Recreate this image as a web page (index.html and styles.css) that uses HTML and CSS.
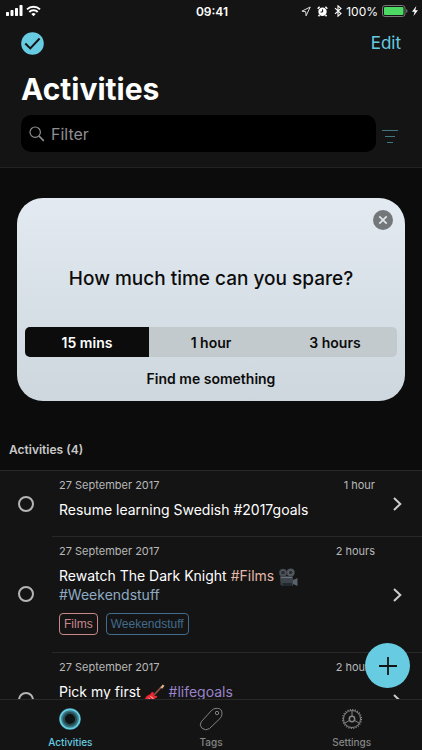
FILE: index.html
```html
<!DOCTYPE html>
<html lang="en">
<head>
<meta charset="utf-8">
<meta name="viewport" content="width=device-width, initial-scale=1">
<title>Activities</title>
<link rel="stylesheet" href="styles.css">
</head>
<body>
<div class="app">
  <header class="header">
    <div class="status">
      <div class="status-side">
        <svg width="17" height="12" viewBox="0 0 17 12" fill="#fff"><rect x="0" y="7" width="3" height="4" rx=".7"/><rect x="4.500" y="5" width="3" height="6" rx=".7"/><rect x="9" y="3" width="3" height="8" rx=".7"/><rect x="13.500" y="0" width="3" height="11" rx=".7"/></svg>
        <svg width="15" height="12" viewBox="0 0 15 12" fill="none" stroke="#fff" stroke-width="2"><path d="M1 4.400a9.300 9.300 0 0 1 13 0M3.300 7a6 6 0 0 1 8.400 0"/><path d="M7.500 11.300L5.300 9.100a3.100 3.100 0 0 1 4.400 0z" fill="#fff" stroke="none"/></svg>
      </div>
      <time class="clock">09:41</time>
      <div class="status-side status-right">
        <svg width="10" height="11" viewBox="0 0 10 11" fill="none" stroke="#ddd" stroke-width="1"><path d="M9.200 1L.9 5.200l3.800.5.400 4.100z"/></svg>
        <svg class="alarm" width="11" height="11" viewBox="0 0 11 11"><circle cx="5.500" cy="5.800" r="4.200" fill="#fff"/><path d="M.7 2.700L2.600.8M10.300 2.700L8.400.8M2.500 9l-1 1.300M8.500 9l1 1.300" stroke="#fff" stroke-width="1.500"/><path d="M5.600 3.300v2.700H3.500" fill="none" stroke="#141414"/></svg>
        <svg width="8" height="12" viewBox="0 0 8 12" fill="none" stroke="#fff" stroke-width="1.100"><path d="M1 3.200l6 5.400L4 11.200V.8l3 2.600-6 5.400"/></svg>
        <span class="percent">100%</span>
        <svg width="26" height="12" viewBox="0 0 26 12"><rect x=".5" y=".5" width="22.500" height="11" rx="2.500" fill="none" stroke="#777"/><rect x="2" y="2" width="19.500" height="8" rx="1" fill="#4cd964"/><path d="M24.200 4v4q1.300-.6 1.300-2t-1.300-2" fill="#777"/></svg>
        <svg width="6" height="10" viewBox="0 0 6 10"><path d="M4.300 0L0 5.700h2.600L1.500 10 6 4.200H3.300z" fill="#fff"/></svg>
      </div>
    </div>
    <div class="nav">
      <button class="icon-button" aria-label="Completed activities">
        <svg width="23" height="23" viewBox="0 0 23 23"><circle cx="11.500" cy="11.500" r="11.300" fill="#67cbe1"/><path d="M4.300 11.500l5 4.900 9.300-9.900" fill="none" stroke="#141414" stroke-width="2"/></svg>
      </button>
      <button class="edit">Edit</button>
    </div>
    <h1 class="title">Activities</h1>
    <div class="search-row">
      <label class="search">
        <svg width="16" height="16" viewBox="0 0 16 16" fill="none" stroke="#8e8e93" stroke-width="1.200"><circle cx="6.200" cy="6.200" r="5.200"/><path d="M10 10l4.800 4.800" stroke-width="1.700"/></svg>
        <input class="search-input" type="text" placeholder="Filter" aria-label="Filter">
      </label>
      <button class="icon-button sort" aria-label="Sort">
        <svg width="18" height="14" viewBox="0 0 18 14" stroke="#417783" stroke-width="1"><path d="M1 .5h16M4 6.500h10M6 12.500h6"/></svg>
      </button>
    </div>
  </header>

  <main class="content">
    <section class="card">
      <button class="icon-button close" aria-label="Close">
        <svg width="20" height="20" viewBox="0 0 20 20"><circle cx="10" cy="10" r="10" fill="#74777a"/><path d="M6.300 6.300l7.400 7.400M13.700 6.300l-7.400 7.400" stroke="#e0e6eb" stroke-width="1.700"/></svg>
      </button>
      <h2 class="question">How much time can you spare?</h2>
      <div class="segments">
        <button class="segment segment-on" aria-pressed="true">15 mins</button>
        <button class="segment" aria-pressed="false">1 hour</button>
        <button class="segment" aria-pressed="false">3 hours</button>
      </div>
      <button class="find">Find me something</button>
    </section>

    <h2 class="section-title">Activities (4)</h2>
    <ul class="list">
      <li class="row">
        <input class="check" type="checkbox" aria-label="Resume learning Swedish">
        <div class="row-main">
          <div class="row-body">
            <div class="meta"><span>27 September 2017</span><span>1 hour</span></div>
            <p class="name">Resume learning Swedish #2017goals</p>
          </div>
          <svg class="chevron" width="9" height="14" viewBox="0 0 9 14"><path d="M1 1l6.300 6L1 13"/></svg>
        </div>
      </li>
      <li class="row">
        <input class="check" type="checkbox" aria-label="Rewatch The Dark Knight">
        <div class="row-main">
          <div class="row-body">
            <div class="meta"><span>27 September 2017</span><span>2 hours</span></div>
            <p class="name">Rewatch The Dark Knight <span class="tag-films">#Films</span>
              <svg class="emoji" role="img" aria-label="Movie camera" width="20" height="20" viewBox="0 0 20 20"><path d="M6 10l-4 7M8 10l2 8" stroke="#33373c" stroke-width="1"/><circle cx="5" cy="4.700" r="4" fill="#41464c"/><circle cx="5" cy="4.700" r="2.400" fill="#292d31" stroke="#686e76" stroke-width=".7"/><circle cx="12.700" cy="4.500" r="4" fill="#4b5057"/><circle cx="12.700" cy="4.500" r="2.400" fill="#2c3034" stroke="#727981" stroke-width=".7"/><path d="M2 9q0-1 1-1h11q1 0 1 1v8q0 1-1 1H4q-2-3-2-9z" fill="#3c434a"/><path d="M3 9.500h11" stroke="#707780" stroke-width=".9"/><path d="M15 12l4.500-2v8L15 16z" fill="#59616a"/><path d="M4 15h10v3H5z" fill="#24292e"/></svg>
              <span class="tag-weekend">#Weekendstuff</span></p>
            <div class="chips"><a class="chip chip-films" href="#films">Films</a><a class="chip chip-weekend" href="#weekendstuff">Weekendstuff</a></div>
          </div>
          <svg class="chevron" width="9" height="14" viewBox="0 0 9 14"><path d="M1 1l6.300 6L1 13"/></svg>
        </div>
      </li>
      <li class="row row-tall">
        <input class="check" type="checkbox" aria-label="Pick my first guitar">
        <div class="row-main">
          <div class="row-body">
            <div class="meta"><span>27 September 2017</span><span>2 hours</span></div>
            <p class="name">Pick my first
              <svg class="emoji" role="img" aria-label="Guitar" width="20" height="20" viewBox="0 0 20 20"><path d="M8 12L16.500 2.800" stroke="#8a5140" stroke-width="1.700"/><path d="M15.500 3.500L17.600.5l1.900 1.200-2.300 3z" fill="#deb78f"/><path d="M1.500 12.200q2-1.500 3.800-2 1.200-2.700 3-1.900 1.100.8.200 2.200.4 1.500 1.700 1.400 1.700-.6 2 .8.100 1.300-2.400 1.800-1 .6-1.200 2.200-1.200 3-3.900 2.700Q0 17.500.2 14.200q.2-1.200 1.300-2z" fill="#ea2631"/><path d="M3.500 14.200l3 2.300M5.500 12.500l3 2.200" stroke="#ffd9d4" stroke-width="1"/><circle cx="3" cy="16.700" r=".7" fill="#fff"/></svg>
              <span class="tag-life">#lifegoals</span></p>
          </div>
          <svg class="chevron" width="9" height="14" viewBox="0 0 9 14"><path d="M1 1l6.300 6L1 13"/></svg>
        </div>
      </li>
    </ul>
  </main>

  <nav class="tabs">
    <button class="add" aria-label="Add activity">
      <svg width="20" height="20" viewBox="0 0 20 20"><path d="M10 1v18M1 10h18" stroke="#141414" stroke-width="1.800"/></svg>
    </button>
    <a class="tab tab-on" href="#activities" aria-current="page">
      <svg width="24" height="24" viewBox="0 0 24 24" fill="none"><circle cx="12" cy="12" r="8" fill="#101313" stroke="#264b53" stroke-width="6"/><circle cx="12" cy="12" r="8.500" stroke="#397984" stroke-width="3"/><circle cx="12" cy="12" r="9.700" stroke="#67cbe1" stroke-width="1.800"/></svg>
      <span>Activities</span>
    </a>
    <a class="tab" href="#tags">
      <svg width="24" height="24" viewBox="0 0 24 24" fill="none" stroke="#828282" stroke-width="1"><path d="M2.200 14.800L12.700 3.300Q14.500 1.500 17 1.400h1.600Q22.800 1.500 22.900 6v1.300Q22.800 9.500 21 11.500L10.300 21.700q-3.500 2.500-7.200-.4-3.300-3-.9-6.500z"/><circle cx="18" cy="6" r="1.700"/></svg>
      <span>Tags</span>
    </a>
    <a class="tab" href="#settings">
      <svg width="24" height="24" viewBox="0 0 24 24" fill="none" stroke="#858585"><circle cx="12" cy="12" r="8.500"/><circle cx="12" cy="12" r="9.400" stroke-width="1.400" stroke-dasharray="1.100 1.361"/><circle cx="12" cy="12" r="2.700" stroke-width="1.500"/><path d="M12 9V3.500M9.400 13.500l-4.800 2.700M14.600 13.500l4.800 2.700"/></svg>
      <span>Settings</span>
    </a>
  </nav>
</div>
</body>
</html>
```
FILE: styles.css
```css
* { box-sizing: border-box; }
body {
  margin: 0;
  background: #0c0c0c;
  color: #fff;
  font-family: Inter, "Liberation Sans", sans-serif;
}
button, input { font: inherit; color: inherit; }
button { border: 0; padding: 0; background: none; }
a { color: inherit; text-decoration: none; }
h1, h2, p, ul { margin: 0; padding: 0; }
svg { display: block; flex: none; }

.app { height: 100vh; display: flex; flex-direction: column; }

.header {
  background: #141414;
  border-bottom: 1px solid #222;
  padding-bottom: 15px;
}
.status {
  display: flex;
  align-items: center;
  height: 22px;
  padding: 0 4px 0 6px;
  font-size: 12px;
}
.status-side { flex: 1; display: flex; align-items: center; gap: 3px; }
.status-right { justify-content: flex-end; gap: 4px; }
.alarm { margin: 0 2px; }
.clock { font-weight: 600; }
.nav {
  display: flex;
  justify-content: space-between;
  align-items: center;
  height: 42px;
  padding: 0 21px;
}
.icon-button { display: flex; }
.edit { color: #67cbe1; font-size: 17px; }
.title {
  padding: 5px 21px 0;
  font-size: 30px;
  line-height: 40px;
  font-weight: 700;
}
.search-row {
  display: flex;
  align-items: center;
  gap: 5px;
  margin-top: 6px;
  padding: 0 23px 0 21px;
}
.search {
  flex: 1;
  display: flex;
  align-items: center;
  gap: 6px;
  height: 37px;
  padding: 0 8px;
  border-radius: 10px;
  background: #000;
}
.search-input {
  flex: 1;
  min-width: 0;
  padding: 0;
  border: 0;
  outline: 0;
  background: none;
  font-size: 16px;
}
.search-input::placeholder { color: #8e8e93; opacity: 1; }
.sort { padding-top: 6px; }

.content { flex: 1; min-height: 0; overflow: hidden; }
.card {
  display: flex;
  flex-direction: column;
  margin: 30px 17px 0;
  padding: 12px 8px;
  border-radius: 26px;
  background: linear-gradient(#e3eaf1, #ced7de);
  color: #0c0c0c;
}
.close { align-self: flex-end; margin-right: 4px; }
.question {
  margin: 36px 0;
  text-align: center;
  font-size: 19px;
  line-height: 25px;
  font-weight: 500;
}
.segments {
  display: flex;
  height: 30px;
  border-radius: 5px;
  overflow: hidden;
  background: #c3cace;
}
.segment { flex: 1; font-size: 14px; font-weight: 600; }
.segment-on { background: #0c0c0c; color: #fff; }
.find { margin-top: 12px; font-size: 14px; line-height: 20px; font-weight: 600; }

.section-title {
  padding: 39px 9px 10px;
  color: #c8c8c8;
  font-size: 12px;
  line-height: 20px;
  font-weight: 600;
}
.list { list-style: none; background: #141414; border-top: 1px solid #292929; }
.row { display: flex; align-items: center; padding-left: 18px; }
.check {
  appearance: none;
  flex: none;
  width: 16px;
  height: 16px;
  margin: 0 18px 0 0;
  border: 2px solid #b5b5b5;
  border-radius: 50%;
}
.row-main {
  flex: 1;
  align-self: stretch;
  display: flex;
  align-items: center;
  gap: 18px;
  padding: 0 20px 0 7px;
}
.row + .row .row-main { border-top: 1px solid #292929; }
.row-tall { min-height: 96px; }
.row-body { flex: 1; align-self: flex-start; padding: 6px 0 17px; }
.meta {
  display: flex;
  justify-content: space-between;
  color: #b8b8b8;
  font-size: 11px;
  line-height: 16px;
}
.name { margin-top: 7px; font-size: 14px; line-height: 19px; }
.emoji { display: inline-block; margin: -3px 0; vertical-align: -4px; }
.tag-films { color: #e4b9aa; }
.tag-weekend { color: #8eabc2; }
.tag-life { color: #9b83c9; }
.chips { display: flex; gap: 8px; margin-top: 9px; }
.chip {
  padding: 0 4px;
  border: 1px solid;
  border-radius: 4px;
  font-family: "Liberation Sans", sans-serif;
  font-size: 12px;
  line-height: 20px;
}
.chip-films { color: #c9878a; }
.chip-weekend { color: #426b8d; }
.chevron path { fill: none; stroke: #ccc; stroke-width: 2; }

.tabs {
  position: relative;
  display: flex;
  height: 51px;
  border-top: 1px solid #292929;
  background: #141414;
}
.tab {
  flex: 1;
  display: flex;
  flex-direction: column;
  align-items: center;
  gap: 3px;
  padding-top: 7px;
  color: #858585;
  font-size: 10px;
  line-height: 16px;
  font-weight: 500;
}
.tab-on { color: #67cbe1; }
.add {
  position: absolute;
  right: 12px;
  bottom: 62px;
  display: flex;
  align-items: center;
  justify-content: center;
  width: 45px;
  height: 45px;
  border-radius: 50%;
  background: #67cbe1;
}
```
